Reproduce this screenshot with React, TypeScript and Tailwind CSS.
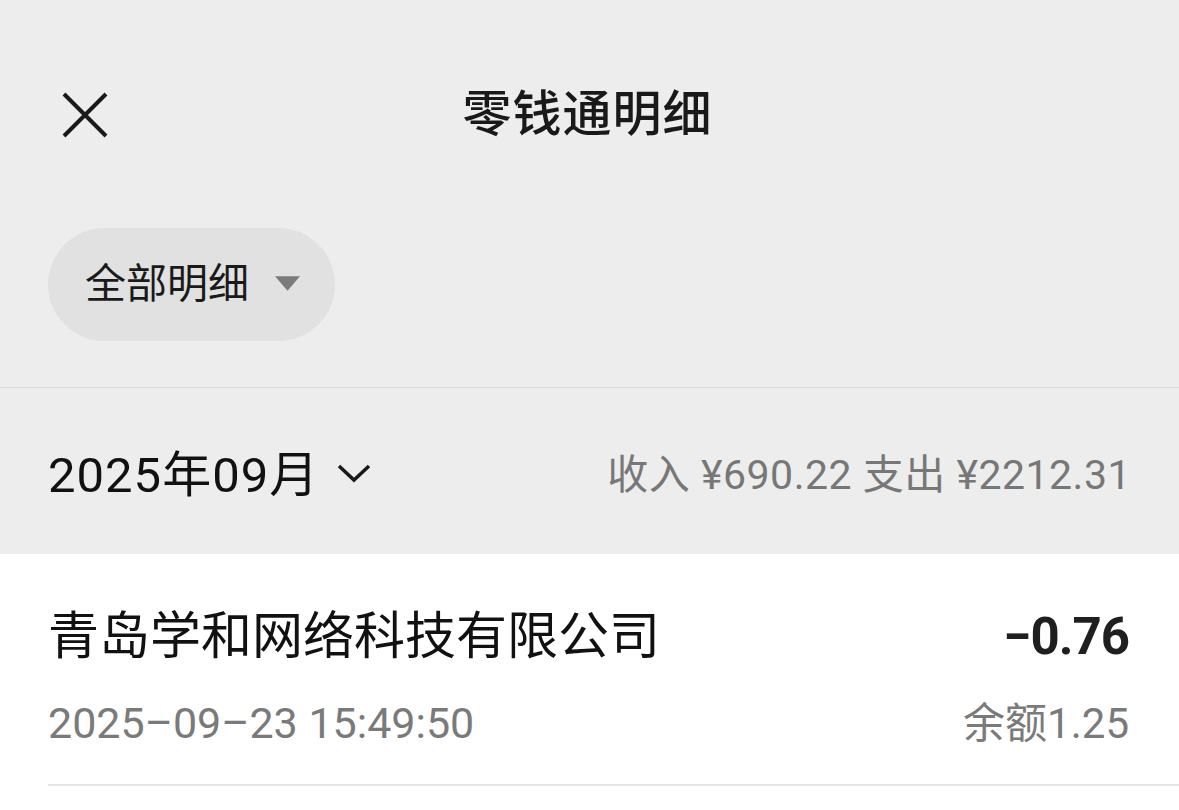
import React from "react";

const font = { fontFamily: 'Roboto, "Noto Sans CJK SC", sans-serif' };

export default function App() {
  return (
    <div className="min-h-screen w-[1179px] bg-white text-[#191919]" style={font}>
      <div className="bg-[#ededed] border-b border-[#d9d9d9]">
        <header className="relative h-[228px] flex items-center justify-center">
          <button className="absolute left-[62px] top-[92px] w-[46px] h-[46px]">
            <svg viewBox="0 0 46 46" className="w-[46px] h-[46px]">
              <path d="M2 2 L44 44 M44 2 L2 44" stroke="#1a1a1a" strokeWidth="4" fill="none" />
            </svg>
          </button>
          <h1 className="text-[49px] font-medium tracking-[1px] pt-[2px] pr-[4px]">零钱通明细</h1>
        </header>
        <div className="px-12 pb-[46px]">
          <div className="inline-flex items-center h-[113px] w-[287px] rounded-full bg-[#e1e1e1] pl-[37px]">
            <span className="text-[41px] text-[#1a1a1a]">全部明细</span>
            <svg viewBox="0 0 24 16" className="ml-[26px] w-[25px] h-[17px]">
              <path d="M0 0 H24 L12 14 Z" fill="#7b7b7b" />
            </svg>
          </div>
        </div>
      </div>
      <div className="bg-[#ededed] h-[166px] px-12 pt-[10px] flex items-center justify-between">
        <div className="flex items-center">
          <span className="text-[49px] text-[#111] tracking-[1px]">2025年09月</span>
          <svg viewBox="0 0 34 20" className="ml-[18px] w-[34px] h-[20px] mt-[-6px]">
            <path d="M2 3 L17 17 L32 3" stroke="#1a1a1a" strokeWidth="3.5" fill="none" />
          </svg>
        </div>
        <span className="text-[41px] text-[#777777] tracking-[0.5px]">收入 ¥690.22 支出 ¥2212.31</span>
      </div>
      <div className="pl-12">
        <div className="pr-[50px] h-[232px] pt-[16px] border-b-2 border-[#e6e6e6] flex flex-col justify-center">
          <div className="flex items-center justify-between">
            <span className="text-[51px] text-[#111]">青岛学和网络科技有限公司</span>
            <span className="text-[51px] font-bold text-[#1f1f1f] tracking-[-1px]">−0.76</span>
          </div>
          <div className="flex items-center justify-between mt-[16px]">
            <span className="text-[43px] text-[#7a7a7a]">2025–09–23 15:49:50</span>
            <span className="text-[42px] text-[#7a7a7a]">余额1.25</span>
          </div>
        </div>
      </div>
    </div>
  );
}
